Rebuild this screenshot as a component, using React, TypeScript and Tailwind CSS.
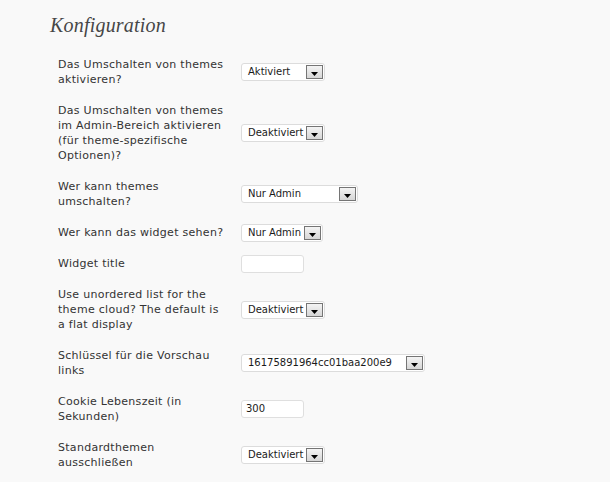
import React from 'react';

type Row = {
  lines: string[];
  kind: 'select' | 'input';
  value: string;
  width: number;
};

const rows: Row[] = [
  { lines: ['Das Umschalten von themes', 'aktivieren?'], kind: 'select', value: 'Aktiviert', width: 84 },
  {
    lines: ['Das Umschalten von themes', 'im Admin-Bereich aktivieren', '(für theme-spezifische', 'Optionen)?'],
    kind: 'select',
    value: 'Deaktiviert',
    width: 84,
  },
  { lines: ['Wer kann themes', 'umschalten?'], kind: 'select', value: 'Nur Admin', width: 117 },
  { lines: ['Wer kann das widget sehen?'], kind: 'select', value: 'Nur Admin', width: 82 },
  { lines: ['Widget title'], kind: 'input', value: '', width: 63 },
  {
    lines: ['Use unordered list for the', 'theme cloud? The default is', 'a flat display'],
    kind: 'select',
    value: 'Deaktiviert',
    width: 84,
  },
  { lines: ['Schlüssel für die Vorschau', 'links'], kind: 'select', value: '16175891964cc01baa200e9', width: 184 },
  { lines: ['Cookie Lebenszeit (in', 'Sekunden)'], kind: 'input', value: '300', width: 63 },
  { lines: ['Standardthemen', 'ausschließen'], kind: 'select', value: 'Deaktiviert', width: 84 },
];

function FakeSelect({ value, width }: { value: string; width: number }) {
  return (
    <div
      className="flex h-[18px] shrink-0 items-center justify-between rounded-[3px] border border-[#dcdcdc] bg-white pl-[6px] pr-[1px]"
      style={{ width }}
    >
      <span className="whitespace-nowrap text-[10px] leading-none text-[#1a1a1a]">{value}</span>
      <span className="flex h-[14px] w-[17px] shrink-0 items-end justify-center border border-[#757575] bg-gradient-to-b from-[#f4f4f4] to-[#d6d6d6] pb-[2px]">
        <svg width="7" height="4" viewBox="0 0 7 4">
          <path d="M0 0h7L3.5 4z" fill="#000" />
        </svg>
      </span>
    </div>
  );
}

function FakeInput({ value, width }: { value: string; width: number }) {
  return (
    <div
      className="flex h-[18px] shrink-0 items-center rounded-[3px] border border-[#dfdfdf] bg-white pl-[4px]"
      style={{ width }}
    >
      <span className="text-[10px] leading-none text-[#1a1a1a]">{value}</span>
    </div>
  );
}

export default function App() {
  return (
    <div className="min-h-screen bg-[#f9f9f9] font-['DejaVu_Sans',sans-serif]">
      <div className="pl-[50px] pt-[11px]">
        <h2 className="font-['Liberation_Serif',serif] text-[20px] italic leading-[28px] tracking-[0.2px] text-[#464646]">
          Konfiguration
        </h2>
        <div className="mt-[10px] pl-[8px]">
          {rows.map((row) => (
            <div key={row.lines[0]} className="flex items-center py-2">
              <div className="w-[175px] text-[11px] leading-[15px] tracking-[0.28px] text-[#333]">
                {row.lines.map((line) => (
                  <div key={line} className="whitespace-nowrap">
                    {line}
                  </div>
                ))}
              </div>
              <div className="ml-[8px] flex h-[15px] items-center">
                {row.kind === 'select' ? (
                  <FakeSelect value={row.value} width={row.width} />
                ) : (
                  <FakeInput value={row.value} width={row.width} />
                )}
              </div>
            </div>
          ))}
        </div>
      </div>
    </div>
  );
}
